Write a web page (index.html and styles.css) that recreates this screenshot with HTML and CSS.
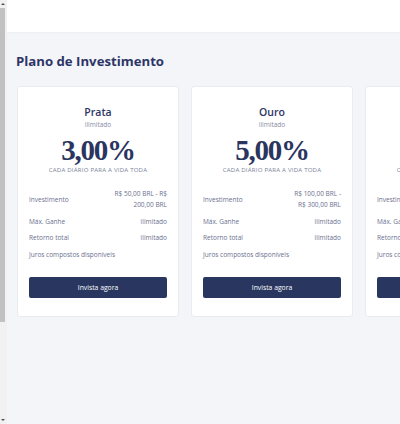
FILE: index.html
```html
<!DOCTYPE html>
<html lang="pt">
<head>
<meta charset="utf-8">
<title>Plano de Investimento</title>
<link rel="stylesheet" href="styles.css">
</head>
<body>
<div class="scrollbar">
  <div class="arrow arrow-up"></div>
  <div class="thumb"></div>
  <div class="track-rest"></div>
  <div class="arrow arrow-down"></div>
</div>
<div class="main">
  <div class="topbar"></div>
  <div class="content">
    <h2 class="page-title">Plano de Investimento</h2>
    <div class="cards">
      <div class="card">
        <div class="plan-name">Prata</div>
        <div class="plan-limit">ilimitado</div>
        <div class="plan-rate">3,00%</div>
        <div class="plan-period">CADA DIÁRIO PARA A VIDA TODA</div>
        <div class="rows">
          <div class="row"><span class="label">Investimento</span><span class="value">R$ 50,00 BRL - R$<br>200,00 BRL</span></div>
          <div class="row"><span class="label">Máx. Ganhe</span><span class="value">ilimitado</span></div>
          <div class="row"><span class="label">Retorno total</span><span class="value">ilimitado</span></div>
          <div class="row"><span class="label">Juros compostos disponíveis</span></div>
        </div>
        <button class="btn">Invista agora</button>
      </div>
      <div class="card">
        <div class="plan-name">Ouro</div>
        <div class="plan-limit">ilimitado</div>
        <div class="plan-rate">5,00%</div>
        <div class="plan-period">CADA DIÁRIO PARA A VIDA TODA</div>
        <div class="rows">
          <div class="row"><span class="label">Investimento</span><span class="value">R$ 100,00 BRL -<br>R$ 300,00 BRL</span></div>
          <div class="row"><span class="label">Máx. Ganhe</span><span class="value">ilimitado</span></div>
          <div class="row"><span class="label">Retorno total</span><span class="value">ilimitado</span></div>
          <div class="row"><span class="label">Juros compostos disponíveis</span></div>
        </div>
        <button class="btn">Invista agora</button>
      </div>
      <div class="card">
        <div class="plan-name">Diamante</div>
        <div class="plan-limit">ilimitado</div>
        <div class="plan-rate">8,00%</div>
        <div class="plan-period">CADA DIÁRIO PARA A VIDA TODA</div>
        <div class="rows">
          <div class="row"><span class="label">Investimento</span><span class="value">R$ 300,00 BRL -<br>R$ 1000,00 BRL</span></div>
          <div class="row"><span class="label">Máx. Ganhe</span><span class="value">ilimitado</span></div>
          <div class="row"><span class="label">Retorno total</span><span class="value">ilimitado</span></div>
          <div class="row"><span class="label">Juros compostos disponíveis</span></div>
        </div>
        <button class="btn">Invista agora</button>
      </div>
    </div>
  </div>
</div>
</body>
</html>
```

FILE: styles.css
```css
html, body {
  margin: 0;
  padding: 0;
  height: 424px;
  overflow: hidden;
}
body {
  display: flex;
  font-family: "Open Sans", "Noto Sans", sans-serif;
  background: #f4f5f9;
}
.scrollbar {
  width: 7px;
  flex-shrink: 0;
  background: #f1f1f1;
  display: flex;
  flex-direction: column;
  align-items: flex-start;
}
.arrow {
  width: 5px;
  height: 8px;
  display: flex;
  align-items: center;
  justify-content: center;
  flex-shrink: 0;
}
.arrow-up::before {
  content: "";
  border-left: 2px solid transparent;
  border-right: 2px solid transparent;
  border-bottom: 2px solid #505050;
}
.arrow-down::before {
  content: "";
  border-left: 2px solid transparent;
  border-right: 2px solid transparent;
  border-top: 2px solid #505050;
}
.thumb {
  width: 5px;
  height: 314px;
  background: #c1c1c1;
}
.track-rest {
  flex: 1;
}
.main {
  flex: 1;
  min-width: 0;
  overflow: hidden;
  background: #f4f5f9;
}
.topbar {
  height: 33px;
  background: #ffffff;
  border-bottom: 1px solid #eef0f4;
  box-sizing: border-box;
}
.content {
  padding: 18px 0 0 10px;
}
.page-title {
  margin: 0 0 0 -1px;
  font-size: 13.2px;
  line-height: 20px;
  font-weight: 700;
  color: #2d3566;
  letter-spacing: 0;
}
.cards {
  display: flex;
  gap: 12px;
  margin-top: 15px;
}
.card {
  width: 162px;
  flex-shrink: 0;
  box-sizing: border-box;
  background: #ffffff;
  border: 1px solid #e9ebf0;
  border-radius: 3px;
  padding: 18px 11px 18px;
  display: flex;
  flex-direction: column;
}
.plan-name {
  text-align: center;
  font-size: 10.5px;
  line-height: 14px;
  font-weight: 600;
  color: #2d3566;
}
.plan-limit {
  text-align: center;
  font-size: 6.5px;
  line-height: 8px;
  margin-top: 2px;
  color: #858aa3;
}
.plan-rate {
  text-align: center;
  font-family: "Liberation Serif", "DejaVu Serif", serif;
  font-weight: 700;
  font-size: 29px;
  line-height: 28px;
  letter-spacing: -1.3px;
  margin-top: 7px;
  color: #2a3560;
}
.plan-period {
  text-align: center;
  font-size: 6.1px;
  line-height: 8px;
  margin-top: 2px;
  color: #7a7f99;
  letter-spacing: 0.2px;
}
.rows {
  margin-top: 14px;
  display: flex;
  flex-direction: column;
  gap: 5.5px;
}
.row {
  display: flex;
  justify-content: space-between;
  align-items: center;
  font-size: 6.5px;
  line-height: 11px;
  color: #6b7090;
}
.value {
  text-align: right;
}
.btn {
  margin-top: 17.5px;
  height: 21px;
  border: 0;
  border-radius: 2px;
  background: #283660;
  color: #ffffff;
  font-family: "Open Sans", "Noto Sans", sans-serif;
  font-size: 6.8px;
  padding: 0;
}
```
